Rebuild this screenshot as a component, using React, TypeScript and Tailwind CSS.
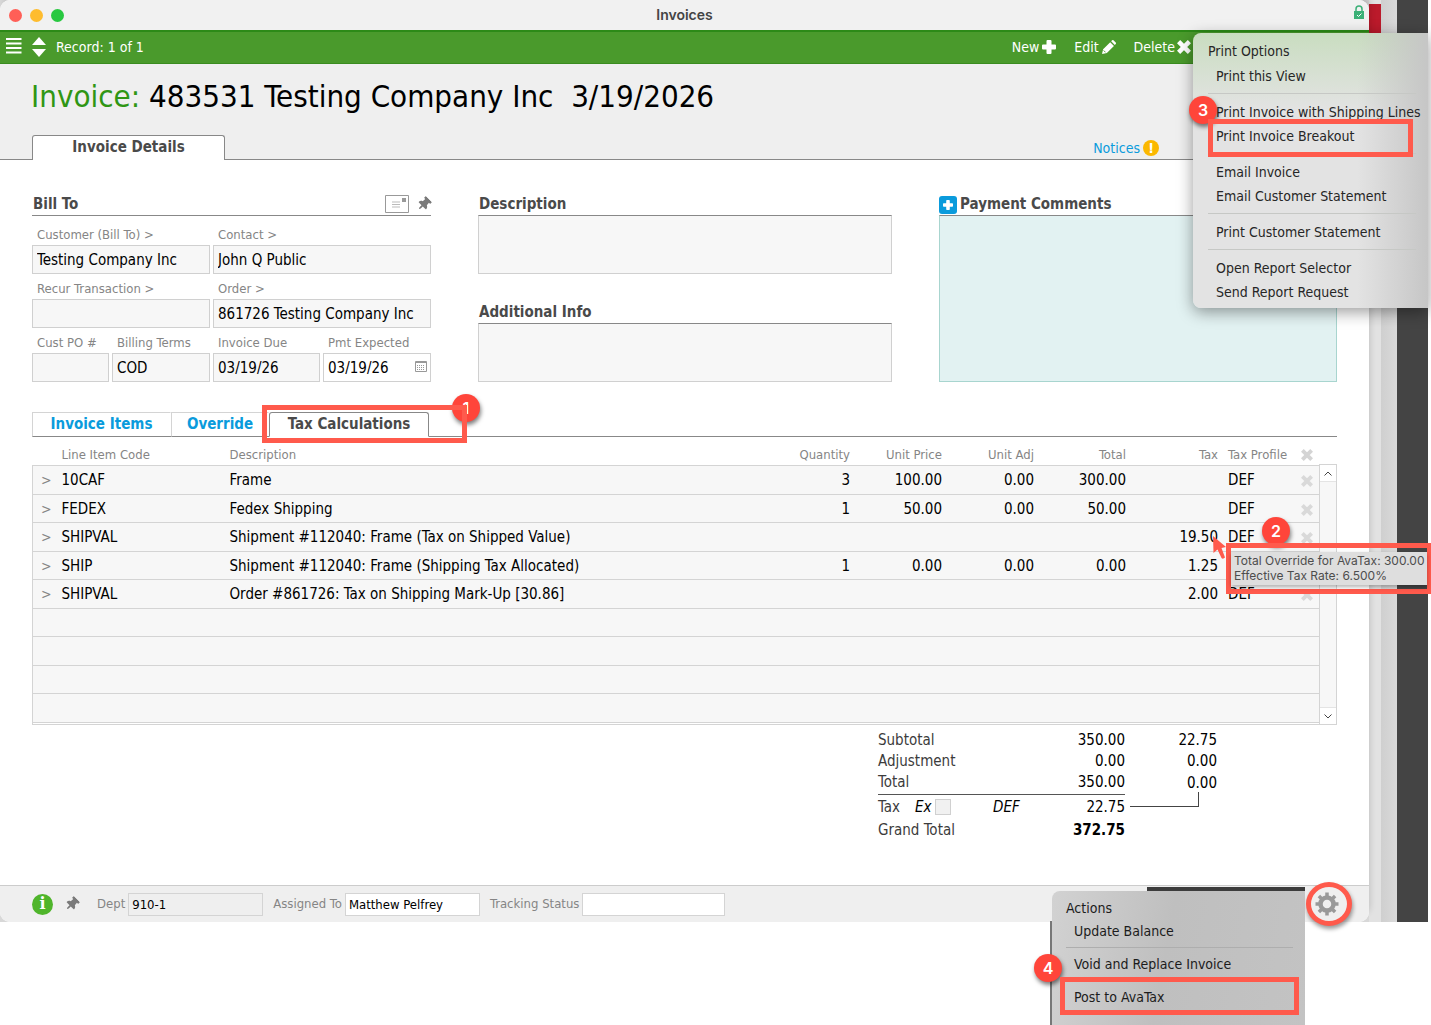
import { useState } from 'react';
import type { ReactNode } from 'react';
import { FaThumbtack } from 'react-icons/fa';

type Line = {
  code: string;
  description: string;
  qty?: string;
  price?: string;
  adj?: string;
  total?: string;
  tax?: string;
  profile?: string;
};

const LINES: Line[] = [
  { code: '10CAF', description: 'Frame', qty: '3', price: '100.00', adj: '0.00', total: '300.00', profile: 'DEF' },
  { code: 'FEDEX', description: 'Fedex Shipping', qty: '1', price: '50.00', adj: '0.00', total: '50.00', profile: 'DEF' },
  { code: 'SHIPVAL', description: 'Shipment #112040: Frame (Tax on Shipped Value)', tax: '19.50', profile: 'DEF' },
  { code: 'SHIP', description: 'Shipment #112040: Frame (Shipping Tax Allocated)', qty: '1', price: '0.00', adj: '0.00', total: '0.00', tax: '1.25' },
  { code: 'SHIPVAL', description: 'Order #861726: Tax on Shipping Mark-Up [30.86]', tax: '2.00', profile: 'DEF' },
];

const EMPTY_ROWS = [0, 1, 2, 3];

const PRINT_GROUPS = [
  ['Print this View'],
  ['Print Invoice with Shipping Lines', 'Print Invoice Breakout'],
  ['Email Invoice', 'Email Customer Statement'],
  ['Print Customer Statement'],
  ['Open Report Selector', 'Send Report Request'],
];

function PlusIcon({ className = '' }: { className?: string }) {
  return (
    <svg viewBox="0 0 14 14" fill="currentColor" className={className}>
      <path d="M5.500 0h3q1 0 1 1v3.500H13q1 0 1 1v3q0 1-1 1H9.500V13q0 1-1 1h-3q-1 0-1-1V9.500H1q-1 0-1-1v-3q0-1 1-1h3.500V1q0-1 1-1z" />
    </svg>
  );
}

function CrossIcon({ className = '' }: { className?: string }) {
  return (
    <svg viewBox="0 0 14 14" fill="none" stroke="currentColor" strokeWidth="4.500" className={className}>
      <path d="M1.600 1.600l10.800 10.800M12.400 1.600L1.600 12.400" />
    </svg>
  );
}

function PencilIcon({ className = '' }: { className?: string }) {
  return (
    <svg viewBox="0 0 15 15" fill="currentColor" className={className}>
      <path d="M0 15l1.200-5.200 7.600-7.500 4 4L5.200 13.800zM9.800 1.400l1-1q.7-.7 1.500 0l2.400 2.400q.7.700 0 1.500l-1 1z" />
      <path d="M1.800 11.200l2 2" stroke="#4a9a2c" strokeWidth="1" />
    </svg>
  );
}

function Badge({ n, className }: { n: number; className: string }) {
  return (
    <span
      className={`absolute flex size-7 items-center justify-center rounded-full bg-[#ff453a] font-[Inter,sans-serif] text-base font-semibold text-white shadow-[1px_3px_4px_rgba(0,0,0,0.5)] ${className}`}
    >
      {n}
    </span>
  );
}

function Outline({ className }: { className: string }) {
  return <span className={`pointer-events-none absolute border-[5px] border-[#ff5a4c] ${className}`} />;
}

function Field({ id, label, value = '', className = '', editable = false, children }: {
  id: string;
  label: string;
  value?: string;
  className?: string;
  editable?: boolean;
  children?: ReactNode;
}) {
  return (
    <div className={`relative min-w-0 ${className}`}>
      <label htmlFor={id} className="block h-[25px] truncate pl-[5px] text-[13px] leading-[29px] text-[#858585]">
        {label}
      </label>
      <input
        id={id}
        defaultValue={value}
        className={`block h-[29px] w-full border border-[#d0d0d0] pl-1 text-[15px] ${editable ? 'bg-white' : 'bg-[#f7f7f7]'}`}
      />
      {children}
    </div>
  );
}

function SectionLabel({ htmlFor, children }: { htmlFor?: string; children: ReactNode }) {
  return (
    <label htmlFor={htmlFor} className="flex h-[23px] items-center pt-0.5 pl-px text-[15px] font-bold text-[#4a4a4a]">
      {children}
    </label>
  );
}

function PrintMenu() {
  return (
    <nav className="absolute top-[33px] right-[3px] z-20 w-[235px] rounded-l-[8px] bg-[linear-gradient(90deg,transparent_70%,#c6c6c6),linear-gradient(180deg,#c9ddc0,#e3e3e3_28%)] pt-1.5 pb-1 pl-[15px] pr-3 text-sm text-[#262626] shadow-[0_4px_16px_rgba(0,0,0,0.4)]">
      <h2 className="h-[25px] leading-6">Print Options</h2>
      {PRINT_GROUPS.map((group, i) => (
        <ul key={group[0]} className={i > 0 ? 'mt-[5px] border-t border-[#c6c8c5] pt-1.5' : ''}>
          {group.map((item) => (
            <li key={item} className="relative h-6">
              <button className="block h-6 pl-2 text-left leading-6 whitespace-nowrap">{item}</button>
              {item === 'Print Invoice with Shipping Lines' && <Badge n={3} className="-left-[19px] -top-1" />}
              {item === 'Print Invoice Breakout' && <Outline className="-top-[5px] left-0 h-[38px] w-[205px]" />}
            </li>
          ))}
        </ul>
      ))}
    </nav>
  );
}

function ActionsMenu() {
  return (
    <nav className="absolute top-px right-16 z-20 h-[139px] w-[255px] pl-0.5 text-sm text-[#1c1c1c]">
      <span className="absolute top-[34px] bottom-0 left-0 w-1 bg-[#777]" />
      <div className="ml-auto h-1 w-[158px] bg-[#3c3c3c]" />
      <div className="relative h-[135px] rounded-tl-[8px] bg-[linear-gradient(100deg,#d2d2d2,#bfbfbf_45%,#c3c3c3)] pt-1.5 pr-3 pl-3.5">
        <h2 className="h-[22px] leading-[22px]">Actions</h2>
        <ul>
          <li><button className="block h-6 pl-2 leading-6">Update Balance</button></li>
          <li className="relative mt-1 border-t border-[#aeaeae] pt-1">
            <button className="block h-6 pl-2 leading-6">Void and Replace Invoice</button>
            <Badge n={4} className="-left-8 top-1.5" />
          </li>
          <li className="relative mt-[9px]">
            <button className="block h-6 pl-2 leading-6">Post to AvaTax</button>
            <Outline className="-top-2 -left-1.5 h-[38px] w-[239px]" />
          </li>
        </ul>
      </div>
    </nav>
  );
}

function TaxTooltip() {
  return (
    <div className="absolute top-5 left-2 z-10 h-[51px] w-[206px] border-[5px] border-[#ff5a4c] text-left">
      <div className="mt-1 h-[33px] bg-[#dedede] pt-px pl-[3px] font-[Inter,sans-serif] text-[12px] leading-[15px] whitespace-nowrap text-[#4d4d4d] shadow-[0_2px_4px_rgba(0,0,0,0.3)]">
        Total Override for AvaTax: 300.00<br />
        Effective Tax Rate: 6.500%
      </div>
      <svg className="absolute -top-3 -left-[19px]" width="16" height="24" viewBox="0 0 16 24">
        <path d="M1 0L1.500 17 5.500 13.500 9.500 22Q11 23.500 13 21.500L9.500 12 14 11z" fill="#ff5a4c" />
      </svg>
    </div>
  );
}

function LineTable() {
  return (
    <table className="w-full table-fixed text-[15px] leading-5">
      <colgroup>
        <col className="w-[29px]" />
        <col className="w-[168px]" />
        <col />
        <col className="w-[92px]" />
        <col className="w-[92px]" />
        <col className="w-[92px]" />
        <col className="w-[92px]" />
        <col className="w-[92px]" />
        <col className="w-[76px]" />
        <col className="w-[25px]" />
      </colgroup>
      <thead>
        <tr className="h-7 border-b border-[#d4d4d4] text-right text-[13px] text-[#858585] [&>th]:p-0 [&>th]:pt-2 [&>th]:font-normal">
          <th />
          <th className="text-left">Line Item Code</th>
          <th className="text-left">Description</th>
          <th>Quantity</th>
          <th>Unit Price</th>
          <th>Unit Adj</th>
          <th>Total</th>
          <th>Tax</th>
          <th><span className="block pl-2.5 text-left whitespace-nowrap">Tax Profile</span></th>
          <th><CrossIcon className="mx-auto size-3 text-[#d4d4d4]" /></th>
        </tr>
      </thead>
      <tbody className="border-l border-[#d4d4d4] bg-[#f7f7f7]">
        {LINES.map((line, i) => (
          <tr key={i} className="border-b border-[#d4d4d4] text-right odd:h-[29px] even:h-7">
            <td className="pr-0.5 text-center text-sm text-[#858585]">&gt;</td>
            <td className="text-left">{line.code}</td>
            <td className="text-left">{line.description}</td>
            <td>{line.qty}</td>
            <td>{line.price}</td>
            <td>{line.adj}</td>
            <td>{line.total}</td>
            <td>{line.tax}</td>
            <td className="relative pl-2.5 text-left">
              {line.profile}
              {line.tax === '19.50' && (
                <>
                  <Badge n={2} className="-top-1.5 left-11" />
                  <TaxTooltip />
                </>
              )}
            </td>
            <td>
              <button aria-label="Delete line" className="block w-full pt-0.5">
                <CrossIcon className="mx-auto size-3 text-[#d9d9d9]" />
              </button>
            </td>
          </tr>
        ))}
        {EMPTY_ROWS.map((n) => (
          <tr key={n} className="border-b border-[#d4d4d4] odd:h-[29px] even:h-7">
            <td colSpan={10} />
          </tr>
        ))}
      </tbody>
    </table>
  );
}

function Chevron({ d }: { d: string }) {
  return (
    <svg width="8" height="5" viewBox="0 0 8 5" fill="none" stroke="#444">
      <path d={d} />
    </svg>
  );
}

function Totals() {
  return (
    <table className="mt-1 mr-[120px] ml-auto w-[339px] text-right text-[15px] leading-5 [&_td]:p-0 [&_th]:p-0 [&_th]:text-left [&_th]:font-normal [&_th]:text-[#3c3c3c]">
      <tbody>
        <tr className="h-[21px]"><th>Subtotal</th><td className="w-[90px]">350.00</td><td className="w-[92px]">22.75</td></tr>
        <tr className="h-[21px]"><th>Adjustment</th><td>0.00</td><td>0.00</td></tr>
        <tr className="h-[23px]"><th>Total</th><td>350.00</td><td>0.00</td></tr>
        <tr className="h-[26px]">
          <th className="border-t border-[#555]">
            <span className="flex items-center">
              <span className="w-[37px]">Tax</span>
              <label htmlFor="tax-ex" className="w-5 text-black italic">Ex</label>
              <input id="tax-ex" type="checkbox" className="size-4 appearance-none border border-[#d0d0d0] bg-[#f1f1f1]" />
              <span className="ml-[42px] text-black italic">DEF</span>
            </span>
          </th>
          <td className="border-t border-[#555]">22.75</td>
          <td className="relative">
            <span className="absolute -top-0.5 left-[5px] h-[15px] w-[69px] border-r border-b border-[#444]" />
          </td>
        </tr>
        <tr className="h-[18px]"><th>Grand Total</th><td className="font-bold">372.75</td><td /></tr>
      </tbody>
    </table>
  );
}

export default function App() {
  const [tab, setTab] = useState('Tax Calculations');

  return (
    <div className="relative min-h-screen overflow-hidden bg-white font-['DejaVu_Sans_Condensed','DejaVu_Sans',sans-serif] text-black">
      <div className="mr-[3px] flex bg-[#d8d8d8]">
        <main className="relative min-w-0 flex-1 rounded-[10px] bg-white shadow-[3px_-6px_6px_-2px_rgba(0,0,0,0.15)]">
          <div className="flex h-[30px] items-center rounded-t-[10px] bg-[#f1f1f1] px-[9px]">
            <span className="flex w-12 gap-2">
              <i className="size-[13px] shrink-0 rounded-full bg-[#ff5f57]" />
              <i className="size-[13px] shrink-0 rounded-full bg-[#febc2e]" />
              <i className="size-[13px] shrink-0 rounded-full bg-[#28c840]" />
            </span>
            <h1 className="flex-1 text-center font-[Inter,sans-serif] text-sm font-semibold text-[#444]">Invoices</h1>
            <span className="flex w-12 justify-end pb-1.5">
              <svg width="10" height="14" viewBox="0 0 10 14" fill="none" className="-mr-1">
                <path d="M2 7V4a3 3 0 0 1 6 0v3" stroke="#3bb077" strokeWidth="1.500" />
                <path d="M0 6h10v8H0z" fill="#3bb077" />
                <path d="M3 10l1.500 1.500L7.500 8.500" stroke="#fff" />
              </svg>
            </span>
          </div>

          <div className="flex h-[34px] items-center border-t-2 border-b border-t-[#2c8a17] border-b-[#3a8c20] bg-[#4a9a2c] pr-[178px] pb-0.5 pl-1.5 text-sm text-white">
            <svg width="40" height="20" viewBox="0 0 40 20" fill="#fff" className="mr-2.5 shrink-0">
              <path d="M0 1h15.500v2H0zM0 5.500h15.500v2H0zM0 10h15.500v2H0zM0 14.500h15.500v2H0z" />
              <path d="M26 8l7-8 7 8zM26 12h14l-7 8z" />
            </svg>
            <span className="flex-1">Record: 1 of 1</span>
            <div className="flex gap-[18px]">
              <button className="flex items-center gap-[3px]">New <PlusIcon className="size-3.5" /></button>
              <button className="flex items-center gap-[3px]">Edit <PencilIcon className="size-3.5" /></button>
              <button className="flex items-center gap-0.5">Delete <CrossIcon className="size-3.5" /></button>
            </div>
          </div>

          <header className="border-b border-[#888] bg-[#efefef]">
            <h2 className="h-[71px] pl-[31px] text-[31px] leading-[65px] whitespace-pre">
              <span className="text-[#2f9614]">Invoice:</span> 483531 Testing Company Inc  3/19/2026
            </h2>
            <div className="flex items-end justify-between pr-[210px] pl-8">
              <button className="-mb-px h-[25px] w-[193px] rounded-t-[3px] border border-b-0 border-[#888] bg-white pb-0.5 text-[15px] font-bold text-[#4a4a4a]">
                Invoice Details
              </button>
              <a href="#notices" className="flex h-6 items-center gap-[3px] pt-0.5 text-sm text-[#0a9bdc]">
                Notices
                <span className="flex size-4 items-center justify-center rounded-full bg-[#fbb800] text-sm font-bold text-white">!</span>
              </a>
            </div>
          </header>

          <section className="px-8 pt-8">
            <div className="grid grid-cols-[399fr_414fr_398fr] gap-x-[47px]">
              <div>
                <div className="mb-1 flex h-6 items-center border-b border-[#888]">
                  <h3 className="flex-1 pt-0.5 pl-px text-[15px] font-bold text-[#4a4a4a]">Bill To</h3>
                  <svg width="24" height="18" viewBox="0 0 24 18" fill="none" stroke="#999" className="mr-2">
                    <path d="M.5.5h23v17H.5z" />
                    <path d="M7 7h8M7 9.500h8M7 12h8" stroke="#bbb" />
                    <path d="M17 3h4v4h-4z" fill="#999" stroke="none" />
                  </svg>
                  <FaThumbtack className="size-3.5 rotate-45 text-[#7a7a7a]" />
                </div>
                <div className="grid grid-cols-[77fr_98fr_107fr_108fr] gap-x-[3px]">
                  <Field id="customer" label="Customer (Bill To) >" value="Testing Company Inc" className="col-span-2" />
                  <Field id="contact" label="Contact >" value="John Q Public" className="col-span-2" />
                  <Field id="recur" label="Recur Transaction >" className="col-span-2" />
                  <Field id="order" label="Order >" value="861726 Testing Company Inc" className="col-span-2" />
                  <Field id="po" label="Cust PO #" />
                  <Field id="terms" label="Billing Terms" value="COD" />
                  <Field id="due" label="Invoice Due" value="03/19/26" />
                  <Field id="expected" label="Pmt Expected" value="03/19/26" editable>
                    <svg width="12" height="11" viewBox="0 0 12 11" className="absolute right-1 bottom-2.5" fill="none" stroke="#999">
                      <path d="M.5.5h11v10H.5zM0 1.500h12" />
                      <path d="M2 4.500h8M2 6.500h8M2 8.500h8" strokeDasharray="1 1" />
                    </svg>
                  </Field>
                </div>
              </div>
              <div className="flex flex-col justify-between">
                <div>
                  <SectionLabel htmlFor="description">Description</SectionLabel>
                  <textarea id="description" className="block h-[59px] w-full resize-none border border-[#d0d0d0] border-t-[#888] bg-[#f7f7f7] p-1 text-[15px]" />
                </div>
                <div>
                  <SectionLabel htmlFor="additional">Additional Info</SectionLabel>
                  <textarea id="additional" className="block h-[59px] w-full resize-none border border-[#d0d0d0] border-t-[#888] bg-[#f7f7f7] p-1 text-[15px]" />
                </div>
              </div>
              <div className="flex flex-col">
                <SectionLabel htmlFor="comments">
                  <span className="-ml-px mr-[3px] flex size-[18px] items-center justify-center rounded-[3px] bg-[#0a9bdc] text-white">
                    <PlusIcon className="size-2.5" />
                  </span>
                  Payment Comments
                </SectionLabel>
                <textarea id="comments" className="block w-full flex-1 resize-none border border-[#a8d5cf] border-t-[#888] bg-[#e2f2f2] p-1 text-[15px]" />
              </div>
            </div>

            <div className="mt-[30px] flex h-[25px] border-b border-[#888] text-[15px] font-bold">
              {[
                ['Invoice Items', 'w-[139px]'],
                ['Override', 'w-[98px]'],
                ['Tax Calculations', 'w-[160px]'],
              ].map(([name, width]) => (
                <div key={name} className={`relative ${width}`}>
                  {name === 'Tax Calculations' && <Badge n={1} className="-top-[18px] left-[183px]" />}
                  <button
                    onClick={() => setTab(name)}
                    className={`h-[25px] w-full border whitespace-nowrap ${tab === name ? 'rounded-t-[3px] border-[#888] border-b-white bg-white text-[#4a4a4a]' : 'border-[#d4d4d4] border-b-[#888] border-r-transparent text-[#0a9bdc]'}`}
                  >
                    {name}
                  </button>
                  {name === 'Tax Calculations' && <Outline className="-top-[7px] -left-[7px] h-[38px] w-[205px]" />}
                </div>
              ))}
            </div>

            <div className="flex">
              <div className="min-w-0 flex-1">
                <LineTable />
                <div className="h-0.5 border-b border-l border-[#d4d4d4]" />
              </div>
              <div className="mt-[27px] flex w-[18px] flex-col justify-between border border-[#d4d4d4] bg-[#f7f7f7]">
                <button aria-label="Scroll up" className="flex h-[17px] items-center justify-center border-b border-[#e4e4e4] bg-white">
                  <Chevron d="M.5 4.500 4 1l3.500 3.500" />
                </button>
                <button aria-label="Scroll down" className="flex h-[17px] items-center justify-center border-t border-[#e4e4e4] bg-white">
                  <Chevron d="M.5.5 4 4 7.500.5" />
                </button>
              </div>
            </div>

            <Totals />
          </section>

          <footer className="relative mt-[45px] flex h-[37px] items-center rounded-b-[10px] border-t border-[#ccc] bg-[#efefef] pl-8 text-[13px] text-[#858585]">
            <span className="flex size-[21px] items-center justify-center rounded-full bg-[#4fb52b] font-['DejaVu_Serif',serif] text-base font-bold text-white">i</span>
            <FaThumbtack className="mr-[18px] ml-3 size-3.5 rotate-45 text-[#7a7a7a]" />
            <label htmlFor="dept">Dept</label>
            <input id="dept" defaultValue="910-1" className="mr-2.5 ml-[3px] h-[23px] w-[135px] border border-[#d4d4d4] bg-[#efefef] pl-[3px] text-black" />
            <label htmlFor="assigned">Assigned To</label>
            <input id="assigned" defaultValue="Matthew Pelfrey" className="mr-2.5 ml-[3px] h-[23px] w-[135px] border border-[#d4d4d4] bg-white pl-[3px] text-black" />
            <label htmlFor="tracking">Tracking Status</label>
            <input id="tracking" className="ml-[3px] h-[23px] w-[143px] border border-[#d4d4d4] bg-white pl-[3px] text-black" />
            <button
              aria-label="Actions"
              className="absolute -top-1 right-[17px] z-20 flex h-11 w-[46px] items-center justify-center rounded-[50%] border-[5px] border-[#ff5a4c] bg-[#efefef] pr-1 shadow-[1px_3px_4px_rgba(0,0,0,0.4)]"
            >
              <svg width="24" height="24" viewBox="0 0 24 24" fill="none" stroke="#999" className="shrink-0">
                <circle cx="12" cy="12" r="6.500" strokeWidth="4.500" />
                <g strokeWidth="3.500">
                  <path d="M12 .5v4M12 19.500v4M.5 12h4M19.500 12h4M3.900 3.900l3 3M17.100 17.100l3 3M20.100 3.900l-3 3M6.900 17.100l-3 3" />
                </g>
              </svg>
            </button>
            <ActionsMenu />
          </footer>
        </main>
        <div className="w-3 bg-[#e2e2e2] pt-1">
          <div className="h-8 bg-[#bb1a2b]" />
        </div>
        <div className="w-4 bg-[linear-gradient(90deg,#cfcfcf,#dadada)]" />
        <div className="w-[31px] bg-[#444]" />
      </div>
      <PrintMenu />
    </div>
  );
}
